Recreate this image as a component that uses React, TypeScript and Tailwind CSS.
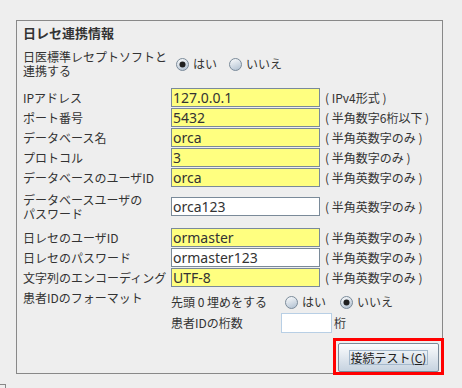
import React from 'react';

const jp = "font-['Noto_Sans_CJK_JP',sans-serif]";

const Radio: React.FC<{ checked?: boolean; label: string }> = ({ checked, label }) => (
  <div className="flex items-center">
    <svg width="13" height="13" viewBox="0 0 13 13" className="shrink-0">
      <defs>
        <linearGradient id={checked ? 'rg-on' : 'rg-off'} x1="0" y1="0" x2="0.4" y2="1">
          <stop offset="0" stopColor="#ffffff" />
          <stop offset="1" stopColor="#b9c7d6" />
        </linearGradient>
      </defs>
      <circle cx="6.5" cy="6.5" r="6" fill={`url(#${checked ? 'rg-on' : 'rg-off'})`} stroke="#7a8a99" strokeWidth="1" />
      {checked && <circle cx="6.5" cy="6.5" r="3" fill="#1f1f1f" />}
    </svg>
    <span className={`ml-[4px] text-[12px] leading-[14px] text-[#333] ${jp}`}>{label}</span>
  </div>
);

const Field: React.FC<{ value: string; yellow?: boolean }> = ({ value, yellow }) => (
  <div
    className={`w-[149px] h-[19px] border border-[#7a8a99] pl-[1px] flex items-center text-[14px] text-[#333] font-['Noto_Sans',sans-serif] ${
      yellow ? 'bg-[#ffff80]' : 'bg-white'
    }`}
  >
    {value}
  </div>
);

const Row: React.FC<{ label: string; value: string; yellow?: boolean; hint: string }> = ({ label, value, yellow, hint }) => (
  <div className="flex items-start h-[20px]">
    <div className={`w-[148px] shrink-0 text-[12px] leading-[19px] text-[#333] whitespace-nowrap ${jp}`}>{label}</div>
    <Field value={value} yellow={yellow} />
    <div className={`ml-[5px] text-[12px] leading-[19px] text-[#333] whitespace-nowrap ${jp}`}>{hint}</div>
  </div>
);

export default function App() {
  return (
    <div className="w-[462px] h-[388px] bg-[#eeeeee] overflow-hidden pt-[20px]">
      <div className="ml-[16px] w-[427px] h-[354px] border border-[#888888] flex flex-col pl-[6px]">
        <div className={`pt-[4px] text-[13px] leading-[16px] font-bold text-[#333] ${jp}`}>日レセ連携情報</div>

        <div className="mt-[9px] flex items-center h-[28px]">
          <div className={`w-[148px] shrink-0 text-[12px] leading-[14px] text-[#333] ${jp}`}>
            <div>日医標準レセプトソフトと</div>
            <div>連携する</div>
          </div>
          <div className="pl-[5px] flex items-center gap-[12px]">
            <Radio checked label="はい" />
            <Radio label="いいえ" />
          </div>
        </div>

        <div className="mt-[10px] flex flex-col">
          <Row label="IPアドレス" value="127.0.0.1" yellow hint="( IPv4形式 )" />
          <Row label="ポート番号" value="5432" yellow hint="( 半角数字6桁以下 )" />
          <Row label="データベース名" value="orca" yellow hint="( 半角英数字のみ )" />
          <Row label="プロトコル" value="3" yellow hint="( 半角数字のみ )" />
          <Row label="データベースのユーザID" value="orca" yellow hint="( 半角英数字のみ )" />

          <div className="flex items-start h-[40px]">
            <div className={`w-[148px] shrink-0 mt-[5px] text-[12px] leading-[14px] text-[#333] ${jp}`}>
              <div>データベースユーザの</div>
              <div>パスワード</div>
            </div>
            <div className="mt-[9px]">
              <Field value="orca123" />
            </div>
            <div className={`mt-[9px] ml-[5px] text-[12px] leading-[19px] text-[#333] whitespace-nowrap ${jp}`}>
              ( 半角英数字のみ )
            </div>
          </div>

          <Row label="日レセのユーザID" value="ormaster" yellow hint="( 半角英数字のみ )" />
          <Row label="日レセのパスワード" value="ormaster123" hint="( 半角英数字のみ )" />
          <Row label="文字列のエンコーディング" value="UTF-8" yellow hint="( 半角英数字のみ )" />

          <div className="flex items-start">
            <div className={`w-[148px] shrink-0 text-[12px] leading-[20px] text-[#333] ${jp}`}>患者IDのフォーマット</div>
            <div className="pt-[4px] flex flex-col">
              <div className="flex items-center h-[20px]">
                <span className={`w-[114px] text-[12px] text-[#333] whitespace-nowrap ${jp}`}>先頭 0 埋めをする</span>
                <div className="flex items-center gap-[14px]">
                  <Radio label="はい" />
                  <Radio checked label="いいえ" />
                </div>
              </div>
              <div className="mt-[1px] flex items-center h-[20px]">
                <span className={`w-[110px] text-[12px] text-[#333] whitespace-nowrap ${jp}`}>患者IDの桁数</span>
                <div className="w-[51px] h-[20px] bg-white border border-[#b8cfe5]" />
                <span className={`ml-[2px] text-[12px] text-[#333] ${jp}`}>桁</span>
              </div>
            </div>
          </div>
        </div>

        <div className="mt-auto flex justify-end">
          <div className="w-[111px] h-[37px] -mr-[2px] -mb-[2px] border-[3px] border-[#ff0000] bg-[#eeeeee] px-[2px] pt-[2px]">
            <button className="w-full h-full border border-[#7a8a99] rounded-[2px] bg-gradient-to-b from-[#fbfcfd] to-[#c6d3e0] flex items-center justify-center">
              <span className={`border border-[#a3b8cc] px-[1px] text-[12px] leading-[13px] text-[#222] ${jp}`}>
                接続テスト(<span className="underline">C</span>)
              </span>
            </button>
          </div>
        </div>
      </div>
      <div className="mt-[10px] w-[6px] h-[4px] border-t border-r border-[#888888]" />
    </div>
  );
}
